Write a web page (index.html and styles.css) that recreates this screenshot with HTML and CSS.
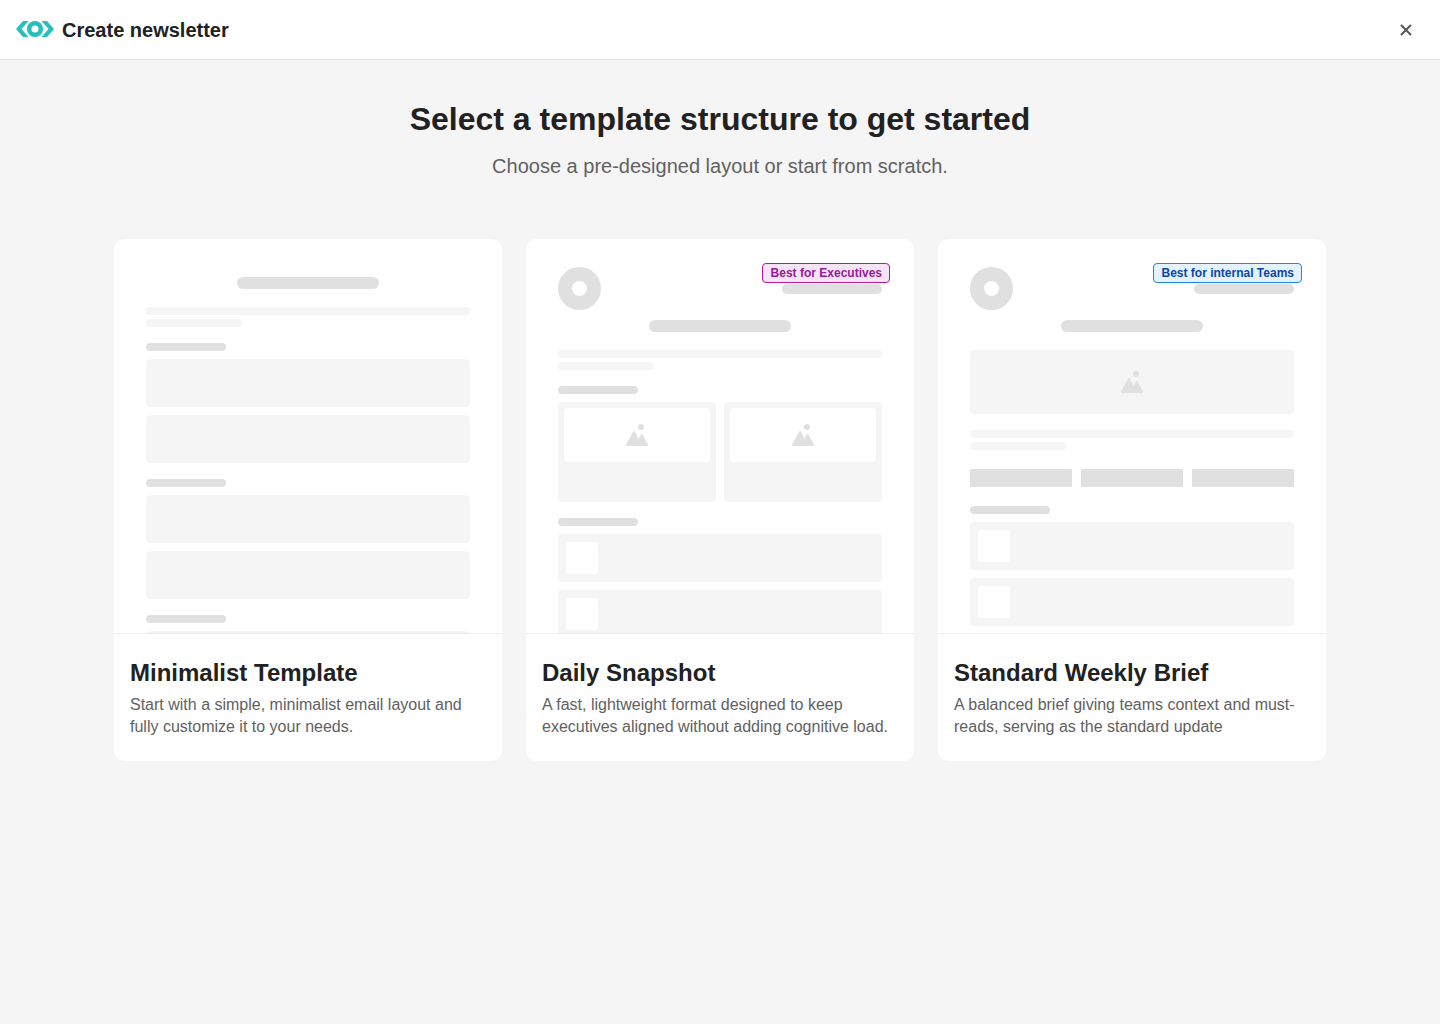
FILE: index.html
```html
<!DOCTYPE html>
<html lang="en">
<head>
<meta charset="utf-8">
<meta name="viewport" content="width=device-width, initial-scale=1">
<title>Create newsletter</title>
<link rel="stylesheet" href="styles.css">
</head>
<body>
<svg class="sprite" aria-hidden="true">
  <symbol id="picture" viewBox="0 0 24 24">
    <circle cx="16" cy="4" r="3"/>
    <path d="M8.100 8.600c.4-.8 1.500-.8 1.900 0L13.500 15.800l2.400-4.300c.4-.7 1.200-.7 1.600 0l5.400 9.700c.5.900.1 1.800-.9 1.800H2.200c-1 0-1.500-.9-1-1.800z"/>
  </symbol>
</svg>
<header class="topbar">
  <svg class="logo" viewBox="0 0 38 18" aria-hidden="true">
    <path d="M7 0h5.500L5.500 8l7 8H7L0 8zM31 0h-5.500l7 8-7 8H31l7-8z"/>
    <circle cx="19" cy="8" r="5.800"/>
  </svg>
  <h1 class="topbar-title">Create newsletter</h1>
  <button class="close" type="button" aria-label="Close">
    <svg viewBox="0 0 12 12" aria-hidden="true"><path d="M1 1l10 10M11 1L1 11"/></svg>
  </button>
</header>
<main class="page">
  <h2 class="heading">Select a template structure to get started</h2>
  <p class="subheading">Choose a pre-designed layout or start from scratch.</p>
  <div class="templates">
    <a class="card" href="#minimalist">
      <div class="preview">
        <div class="title-bar title-bar-first"></div>
        <div class="lines"><div class="line"></div><div class="line line-short"></div></div>
        <div class="section"><div class="label"></div><div class="row"></div><div class="row"></div></div>
        <div class="section"><div class="label"></div><div class="row"></div><div class="row"></div></div>
        <div class="section"><div class="label"></div><div class="row"></div><div class="row"></div></div>
      </div>
      <div class="caption">
        <h3 class="name">Minimalist Template</h3>
        <p class="description">Start with a simple, minimalist email layout and fully customize it to your needs.</p>
      </div>
    </a>
    <a class="card" href="#daily">
      <span class="badge badge-purple">Best for Executives</span>
      <div class="preview">
        <div class="masthead"><div class="ring"></div><div class="date"></div></div>
        <div class="title-bar"></div>
        <div class="lines"><div class="line"></div><div class="line line-short"></div></div>
        <div class="section">
          <div class="label"></div>
          <div class="tiles">
            <div class="tile"><div class="tile-image"><svg class="picture" aria-hidden="true"><use href="#picture"/></svg></div></div>
            <div class="tile"><div class="tile-image"><svg class="picture" aria-hidden="true"><use href="#picture"/></svg></div></div>
          </div>
        </div>
        <div class="section">
          <div class="label"></div>
          <div class="row"><div class="thumb"></div></div>
          <div class="row"><div class="thumb"></div></div>
        </div>
      </div>
      <div class="caption">
        <h3 class="name">Daily Snapshot</h3>
        <p class="description">A fast, lightweight format designed to keep executives aligned without adding cognitive load.</p>
      </div>
    </a>
    <a class="card" href="#weekly">
      <span class="badge badge-blue">Best for internal Teams</span>
      <div class="preview">
        <div class="masthead"><div class="ring"></div><div class="date"></div></div>
        <div class="title-bar"></div>
        <div class="hero"><svg class="picture" aria-hidden="true"><use href="#picture"/></svg></div>
        <div class="lines"><div class="line"></div><div class="line line-short"></div></div>
        <div class="stats"><div class="stat"></div><div class="stat"></div><div class="stat"></div></div>
        <div class="section">
          <div class="label"></div>
          <div class="row"><div class="thumb"></div></div>
          <div class="row"><div class="thumb"></div></div>
        </div>
      </div>
      <div class="caption">
        <h3 class="name">Standard Weekly Brief</h3>
        <p class="description">A balanced brief giving teams context and must-reads, serving as the standard update</p>
      </div>
    </a>
  </div>
</main>
</body>
</html>
```
FILE: styles.css
```css
* { box-sizing: border-box; }

body {
  margin: 0;
  min-height: 100vh;
  background: #f5f5f5;
  color: #212121;
  font-family: "Liberation Sans", Arial, sans-serif;
}

h1, h2, h3, p { margin: 0; }

.sprite { display: none; }

.topbar {
  display: flex;
  align-items: center;
  height: 60px;
  padding: 0 24px 0 16px;
  background: #fff;
  border-bottom: 1px solid #e0e0e0;
}

.logo { width: 38px; height: 18px; fill: #26bfbf; }
.logo circle { fill: none; stroke: #26bfbf; stroke-width: 4.5; }

.topbar-title {
  margin-left: 8px;
  font-size: 20px;
  line-height: 24px;
}

.close {
  display: flex;
  align-items: center;
  justify-content: center;
  width: 20px;
  height: 20px;
  margin-left: auto;
  padding: 0;
  border: 0;
  background: none;
  cursor: pointer;
}
.close svg { width: 12px; height: 12px; fill: none; stroke: #56565a; stroke-width: 2; }

.page { padding: 40px 24px; }

.heading {
  font-size: 32px;
  line-height: 38px;
  text-align: center;
}

.subheading {
  margin-top: 14px;
  color: #616161;
  font-size: 20px;
  line-height: 28px;
  text-align: center;
}

.templates {
  display: grid;
  grid-template-columns: repeat(3, 1fr);
  gap: 24px;
  max-width: 1212px;
  margin: 59px auto 0;
}

.card {
  position: relative;
  overflow: hidden;
  border-radius: 10px;
  background: #fff;
  color: inherit;
  text-decoration: none;
}

.badge {
  position: absolute;
  top: 24px;
  right: 24px;
  padding: 0 7px 0 8px;
  border: 1px solid;
  border-radius: 4px;
  font-size: 12px;
  font-weight: bold;
  line-height: 18px;
}
.badge-purple { border-color: #b5179e; background: #f5e4f5; color: #951b98; }
.badge-blue { border-color: #1e88e5; background: #e3f2fd; color: #0d47a1; }

.preview {
  height: 395px;
  overflow: hidden;
  padding: 28px 32px 0;
  border-bottom: 1px solid #eee;
}

.masthead {
  display: flex;
  align-items: center;
  justify-content: space-between;
  margin-bottom: 10px;
}
.ring { width: 43px; height: 43px; border: 14px solid #e0e0e0; border-radius: 50%; }
.date { width: 100px; height: 10px; border-radius: 5px; background: #e0e0e0; }

.title-bar {
  width: 142px;
  height: 12px;
  margin: 0 auto 18px;
  border-radius: 6px;
  background: #e0e0e0;
}
.title-bar-first { margin-top: 10px; }

.lines { display: grid; gap: 4px; }
.line { height: 8px; border-radius: 4px; background: #f5f5f5; }
.line-short { width: 96px; }

.section { display: grid; gap: 8px; margin-top: 16px; }
.label { width: 80px; height: 8px; border-radius: 4px; background: #e0e0e0; }
.row { height: 48px; padding: 8px; border-radius: 4px; background: #f5f5f5; }
.thumb { width: 32px; height: 32px; border-radius: 4px; background: #fff; }

.tiles { display: grid; grid-template-columns: 1fr 1fr; gap: 8px; }
.tile { height: 100px; padding: 6px; border-radius: 4px; background: #f5f5f5; }
.tile-image, .hero {
  display: flex;
  align-items: center;
  justify-content: center;
  border-radius: 4px;
}
.tile-image { height: 54px; background: #fff; }
.hero { height: 64px; margin-bottom: 16px; background: #f5f5f5; }
.picture { width: 24px; height: 24px; fill: #e0e0e0; }

.stats { display: grid; grid-template-columns: repeat(3, 1fr); gap: 9px; margin: 19px 0; }
.stat { height: 18px; border-radius: 1px; background: #e0e0e0; }
.stats + .section { margin-top: 0; }

.caption { padding: 24px 16px 23px; }
.name { font-size: 24px; line-height: 30px; }
.description {
  margin-top: 6px;
  color: #616161;
  font-size: 16px;
  line-height: 22px;
}
```
